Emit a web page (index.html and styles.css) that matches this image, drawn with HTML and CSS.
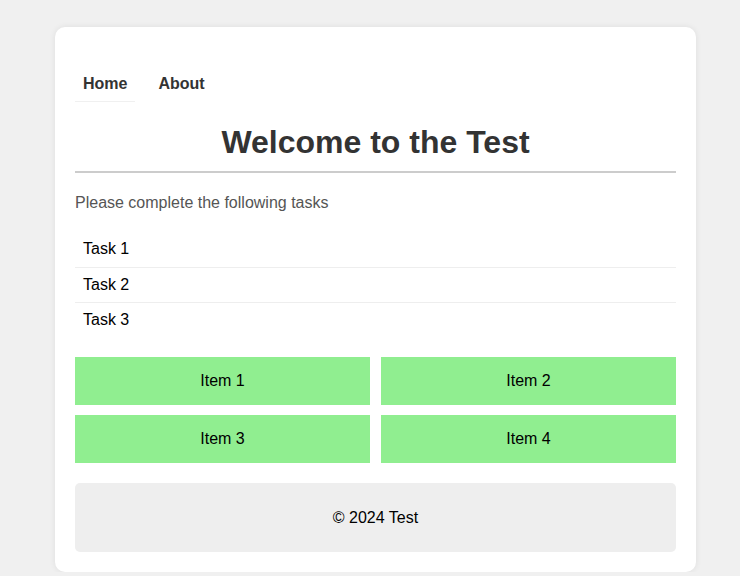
FILE: index.html
```html
<!DOCTYPE html>
<html>
<head>
<meta charset="utf-8">
<link rel="stylesheet" href="styles.css">
</head>
<body>
<div class="card">
  <nav class="nav">
    <a class="nav-link active">Home</a>
    <a class="nav-link">About</a>
  </nav>
  <h1 class="title">Welcome to the Test</h1>
  <p class="intro">Please complete the following tasks</p>
  <ul class="tasks">
    <li class="task">Task 1</li>
    <li class="task">Task 2</li>
    <li class="task">Task 3</li>
  </ul>
  <div class="grid">
    <div class="item">Item 1</div>
    <div class="item">Item 2</div>
    <div class="item">Item 3</div>
    <div class="item">Item 4</div>
  </div>
  <footer class="footer">© 2024 Test</footer>
</div>
</body>
</html>
```
FILE: styles.css
```css
html, body {
  margin: 0;
  padding: 0;
  background: #f0f0f0;
  font-family: "Liberation Sans", Arial, sans-serif;
  font-size: 16px;
  line-height: 18px;
  color: #000;
}
.card {
  box-sizing: border-box;
  width: 641px;
  margin: 27px 0 0 55px;
  padding: 20px;
  background: #fff;
  border-radius: 10px;
  box-shadow: 0 0 6px rgba(0,0,0,0.08);
}
.nav {
  display: flex;
  gap: 15px;
  margin-top: 20px;
}
.nav-link {
  display: block;
  padding: 8px;
  font-weight: bold;
  color: #333;
  border-bottom: 1px solid transparent;
}
.nav-link.active {
  border-bottom-color: #f0f0f0;
}
.title {
  margin: 22px 0 0;
  padding-bottom: 10px;
  font-size: 32px;
  line-height: 37px;
  font-weight: bold;
  color: #333;
  text-align: center;
  border-bottom: 2px solid #ccc;
}
.intro {
  margin: 21px 0 20px;
  color: #555;
}
.tasks {
  list-style: none;
  margin: 0 0 18.5px;
  padding: 0;
}
.task {
  padding: 8px;
  line-height: 18.5px;
  border-bottom: 1px solid #eee;
}
.task:last-child {
  border-bottom-color: transparent;
}
.grid {
  display: grid;
  grid-template-columns: 1fr 1fr;
  gap: 10px 11px;
}
.item {
  background: #90ee90;
  padding: 15px;
  text-align: center;
}
.footer {
  margin-top: 20px;
  padding: 25px 0;
  line-height: 19px;
  background: #eee;
  border-radius: 5px;
  text-align: center;
}
```
